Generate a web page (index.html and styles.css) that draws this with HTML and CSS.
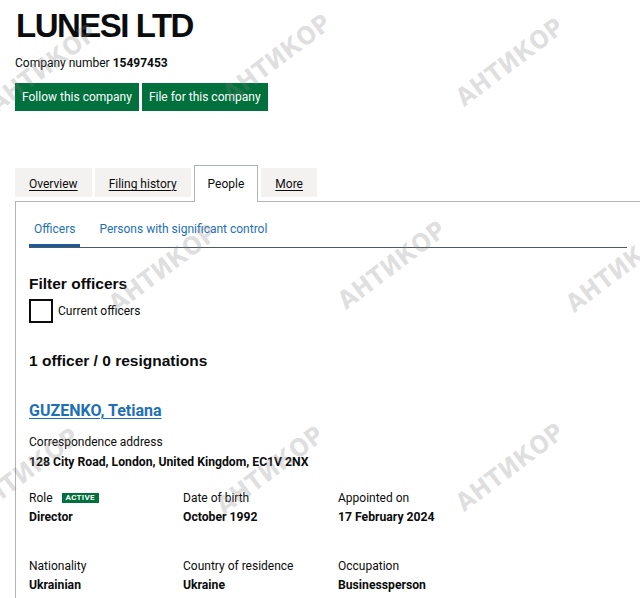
FILE: index.html
```html
<!DOCTYPE html>
<html lang="en">
<head>
<meta charset="utf-8">
<title>LUNESI LTD - People</title>
<link rel="stylesheet" href="styles.css">
</head>
<body>
<div class="page">
  <h1 class="title">LUNESI LTD</h1>
  <p class="company-number">Company number <strong>15497453</strong></p>
  <div class="actions">
    <a class="btn" href="#">Follow this company</a>
    <a class="btn" href="#">File for this company</a>
  </div>

  <ul class="tabs">
    <li class="tab"><a href="#">Overview</a></li>
    <li class="tab"><a href="#">Filing history</a></li>
    <li class="tab tab-active"><span>People</span></li>
    <li class="tab"><a href="#">More</a></li>
  </ul>

  <div class="panel">
    <ul class="subnav">
      <li class="subnav-item subnav-active">Officers</li>
      <li class="subnav-item">Persons with significant control</li>
    </ul>

    <h2 class="heading-s filter-heading">Filter officers</h2>
    <div class="checkbox-row">
      <span class="checkbox"></span>
      <span class="checkbox-label">Current officers</span>
    </div>

    <h2 class="heading-s count-heading">1 officer / 0 resignations</h2>

    <a class="officer-name" href="#">GUZENKO, Tetiana</a>
    <div class="label address-label">Correspondence address</div>
    <div class="value">128 City Road, London, United Kingdom, EC1V 2NX</div>

    <div class="details">
      <div class="cell">
        <div class="label label-row">Role <span class="tag">ACTIVE</span></div>
        <div class="value">Director</div>
      </div>
      <div class="cell">
        <div class="label">Date of birth</div>
        <div class="value">October 1992</div>
      </div>
      <div class="cell">
        <div class="label">Appointed on</div>
        <div class="value">17 February 2024</div>
      </div>
      <div class="cell">
        <div class="label">Nationality</div>
        <div class="value">Ukrainian</div>
      </div>
      <div class="cell">
        <div class="label">Country of residence</div>
        <div class="value">Ukraine</div>
      </div>
      <div class="cell">
        <div class="label">Occupation</div>
        <div class="value">Businessperson</div>
      </div>
    </div>
  </div>

  <div class="watermarks" aria-hidden="true">
    <span class="wm wm-1">АНТИКОР</span>
    <span class="wm wm-2">АНТИКОР</span>
    <span class="wm wm-3">АНТИКОР</span>
    <span class="wm wm-4">АНТИКОР</span>
    <span class="wm wm-5">АНТИКОР</span>
    <span class="wm wm-6">АНТИКОР</span>
    <span class="wm wm-7">АНТИКОР</span>
    <span class="wm wm-8">АНТИКОР</span>
    <span class="wm wm-9">АНТИКОР</span>
  </div>
</div>
</body>
</html>
```

FILE: styles.css
```css
* { box-sizing: border-box; }

html, body {
  margin: 0;
  background: #ffffff;
}

body {
  font-family: Roboto, "Liberation Sans", sans-serif;
  color: #0b0c0c;
  overflow: hidden;
}

.page {
  position: relative;
  height: 598px;
  padding: 8px 0 0 15px;
  overflow: hidden;
}

.title {
  margin: 0;
  padding-left: 1px;
  font-family: "Liberation Sans", Arial, sans-serif;
  font-weight: 700;
  font-size: 33px;
  line-height: 36px;
  letter-spacing: -1.5px;
}

.company-number {
  margin: 11px 0 0;
  font-size: 12px;
  line-height: 16px;
}

.company-number strong {
  font-weight: 700;
}

.actions {
  display: flex;
  gap: 3px;
  margin-top: 12px;
}

.btn {
  display: block;
  background: #00703c;
  color: #ffffff;
  text-decoration: none;
  font-size: 12px;
  line-height: 16px;
  padding: 6px 7px;
}

.tabs {
  display: flex;
  align-items: flex-end;
  gap: 3px;
  list-style: none;
  margin: 54px 0 0;
  padding: 0;
}

.tab {
  background: #f3f2f1;
  font-size: 12px;
  line-height: 16px;
  padding: 8px 14px 5px;
  margin-bottom: 4px;
}

.tab a {
  color: #0b0c0c;
  text-decoration: underline;
  text-underline-offset: 2px;
  text-decoration-thickness: 1px;
}

.tab-active {
  position: relative;
  z-index: 1;
  background: #ffffff;
  border: 1px solid #b1b4b6;
  border-bottom: 0;
  padding: 10px 13px 10px;
  margin-bottom: -1px;
}

.panel {
  border-top: 1px solid #b1b4b6;
  border-left: 1px solid #b1b4b6;
  padding: 0 13px 20px 13px;
}

.subnav {
  display: flex;
  gap: 14px;
  list-style: none;
  margin: 0;
  padding: 0;
  border-bottom: 1px solid #505a5f;
}

.subnav-item {
  font-size: 12px;
  line-height: 16px;
  color: #1d70b8;
  padding: 19px 5px 7px;
  border-bottom: 3px solid transparent;
}

.subnav-active {
  border-bottom-color: #1d5a99;
}

.heading-s {
  margin: 0;
  font-family: "Liberation Sans", Arial, sans-serif;
  font-weight: 700;
  font-size: 15.5px;
  line-height: 20px;
}

.filter-heading {
  margin-top: 26px;
}

.checkbox-row {
  display: flex;
  align-items: center;
  gap: 5px;
  margin-top: 5px;
}

.checkbox {
  display: block;
  width: 24px;
  height: 24px;
  border: 2px solid #0b0c0c;
}

.checkbox-label {
  font-size: 12px;
  line-height: 16px;
}

.count-heading {
  margin-top: 28px;
}

.officer-name {
  display: block;
  margin-top: 30px;
  font-size: 16px;
  line-height: 20px;
  font-weight: 700;
  color: #1d70b8;
  text-decoration: underline;
  text-underline-offset: 2px;
  text-decoration-thickness: 1px;
  width: max-content;
}

.label {
  font-size: 12px;
  line-height: 16px;
}

.address-label {
  margin-top: 13px;
}

.value {
  margin-top: 4px;
  font-size: 12.2px;
  line-height: 16px;
  font-weight: 700;
}

.details {
  display: grid;
  grid-template-columns: 154px 155px 155px;
  row-gap: 33px;
  margin-top: 20px;
}

.details .value {
  margin-top: 3px;
}

.label-row {
  display: flex;
  align-items: center;
  gap: 9px;
}

.tag {
  display: block;
  background: #00703c;
  color: #ffffff;
  font-size: 8px;
  line-height: 8px;
  font-weight: 700;
  letter-spacing: 0.3px;
  padding: 1px 4px;
}

.watermarks {
  position: absolute;
  inset: 0;
  pointer-events: none;
  overflow: hidden;
  z-index: 5;
}

.wm {
  position: absolute;
  transform: translate(-50%, -50%) rotate(-37deg);
  font-family: "DejaVu Sans Condensed", "DejaVu Sans", sans-serif;
  font-stretch: condensed;
  font-weight: 700;
  font-size: 25px;
  line-height: 1;
  letter-spacing: 0.5px;
  color: rgba(128, 128, 128, 0.25);
  white-space: nowrap;
}

.wm-1 { left: 43px;  top: 68px; }
.wm-2 { left: 277px; top: 58px; }
.wm-3 { left: 510px; top: 62px; }
.wm-4 { left: 163px; top: 268px; }
.wm-5 { left: 392px; top: 265px; }
.wm-6 { left: 620px; top: 268px; }
.wm-7 { left: 25px;  top: 472px; }
.wm-8 { left: 270px; top: 470px; }
.wm-9 { left: 510px; top: 467px; }
```
